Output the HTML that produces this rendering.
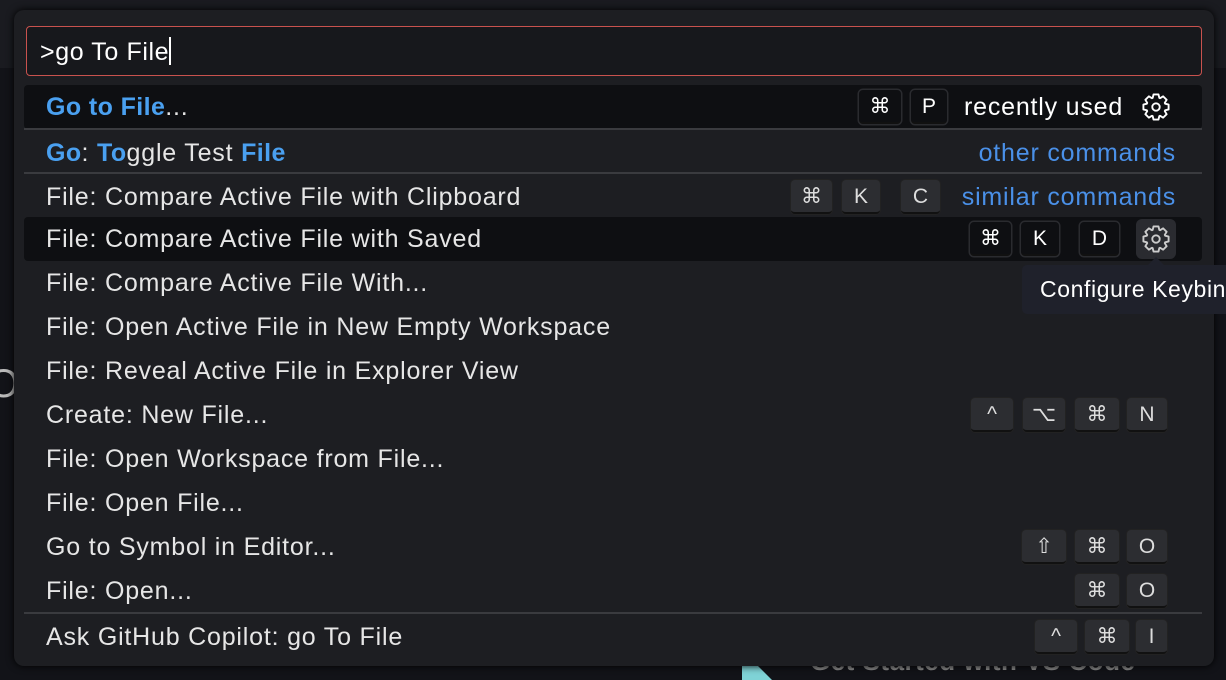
<!DOCTYPE html>
<html><head><meta charset="utf-8"><style>
*{margin:0;padding:0;box-sizing:border-box}
html,body{width:1226px;height:680px;overflow:hidden}
body{background:#121318;position:relative;font-family:"Liberation Sans",sans-serif;color:#e6e6e6}
.topband{position:absolute;left:0;top:0;width:1226px;height:68px;background:#1a1b20}
.bgtext{position:absolute;left:810px;top:646px;font-size:26px;color:#8a8a8a;font-weight:bold;letter-spacing:0.5px}
.tri{position:absolute;left:742px;top:650px;width:0;height:0;border-left:30px solid #7fd3d6;border-top:30px solid transparent}
.O{position:absolute;left:-12px;top:362px;font-size:40px;color:#bbb}
.panel{position:absolute;left:14px;top:10px;width:1200px;height:656px;background:#1d1e22;border-radius:10px;box-shadow:0 0 8px #000}
.input{position:absolute;left:26px;top:26px;width:1176px;height:50px;border:1.5px solid #c9524e;border-radius:4px;background:#17181c;font-size:25px;color:#fff;padding:10px 0 0 13px;letter-spacing:0.6px}
.caret{display:inline-block;width:1.5px;height:28px;background:#fff;vertical-align:-5px}
.row{position:absolute;left:24px;width:1178px;height:44px;font-size:25px;letter-spacing:0.8px;line-height:44px;padding-left:22px;white-space:nowrap}
.sel{background:#0e0f12;border-radius:4px}
.b{color:#4aa0f0;font-weight:bold;letter-spacing:0.4px}
.sep{position:absolute;left:24px;width:1178px;height:2px;background:#3a3b3f}
.k{position:absolute;top:5px;height:34px;background:#2c2d31;border-radius:4px;border-bottom:2px solid #111;box-shadow:0 0 0 1px #222;font-size:21px;line-height:33px;text-align:center;color:#ddd;letter-spacing:0}
.sel .k{background:#0e0f12;box-shadow:0 0 0 1.5px #2a2b2f;color:#fff}
.lab{position:absolute;top:0;font-size:25px;letter-spacing:0.8px}
.blue{color:#4a90e8}
.tip{position:absolute;left:1022px;top:265px;width:220px;height:49px;background:#1f212b;border-radius:5px;font-size:23px;line-height:49px;padding-left:18px;color:#fff;white-space:nowrap;overflow:hidden;letter-spacing:0.6px}
.tipa{position:absolute;left:1148px;top:257px;border:8px solid transparent;border-top:0;border-bottom-color:#1f212b}
</style></head><body>
<div class="topband"></div>
<div class="O">O</div>
<div class="tri"></div><div class="bgtext">Get Started with VS Code</div>
<div class="panel"></div>
<div class="input">&gt;go To File<span class="caret"></span></div>

<svg width="0" height="0" style="position:absolute"><defs><g id="gear"><polygon transform="translate(12,12)" fill="none" stroke="currentColor" stroke-width="1.6" stroke-linejoin="round" points="7.8,-2.84 10.8,-2.1 10.8,2.1 7.8,2.84 7.52,3.51 9.12,6.15 6.15,9.12 3.51,7.52 2.84,7.8 2.1,10.8 -2.1,10.8 -2.84,7.8 -3.51,7.52 -6.15,9.12 -9.12,6.15 -7.52,3.51 -7.8,2.84 -10.8,2.1 -10.8,-2.1 -7.8,-2.84 -7.52,-3.51 -9.12,-6.15 -6.15,-9.12 -3.51,-7.52 -2.84,-7.8 -2.1,-10.8 2.1,-10.8 2.84,-7.8 3.51,-7.52 6.15,-9.12 9.12,-6.15 7.52,-3.51"/><circle cx="12" cy="12" r="3.2" fill="none" stroke="currentColor" stroke-width="1.6"/></g></defs></svg>

<div class="row sel" style="top:85px"><span class="b">Go to File</span>...
<div class="k" style="left:835px;width:42px">⌘</div><div class="k" style="left:887px;width:36px">P</div>
<div class="lab" style="left:940px;color:#fff">recently used</div>
<svg style="position:absolute;left:1118px;top:8px;color:#fff" width="28" height="28" viewBox="0 0 24 24"><use href="#gear"/></svg>
</div>
<div class="sep" style="top:128px"></div>
<div class="row" style="top:131px"><span class="b">Go</span>: <span class="b">To</span>ggle Test <span class="b">File</span>
<div class="lab blue" style="right:26px">other commands</div></div>
<div class="sep" style="top:172px"></div>
<div class="row" style="top:175px">File: Compare Active File with Clipboard
<div class="k" style="left:767px;width:41px">⌘</div><div class="k" style="left:818px;width:38px">K</div><div class="k" style="left:877px;width:39px">C</div>
<div class="lab blue" style="right:26px">similar commands</div></div>
<div class="row sel" style="top:217px">File: Compare Active File with Saved
<div class="k" style="left:946px;width:41px">⌘</div><div class="k" style="left:997px;width:38px">K</div><div class="k" style="left:1056px;width:39px">D</div>
<div style="position:absolute;left:1112px;top:2px;width:40px;height:40px;background:#2a2b30;border-radius:6px"></div>
<svg style="position:absolute;left:1118px;top:8px;color:#ccc" width="28" height="28" viewBox="0 0 24 24"><use href="#gear"/></svg>
</div>
<div class="row" style="top:261px">File: Compare Active File With...</div>
<div class="row" style="top:305px">File: Open Active File in New Empty Workspace</div>
<div class="row" style="top:349px">File: Reveal Active File in Explorer View</div>
<div class="row" style="top:393px">Create: New File...
<div class="k" style="left:947px;width:42px">^</div><div class="k" style="left:999px;width:42px">⌥</div><div class="k" style="left:1051px;width:44px">⌘</div><div class="k" style="left:1103px;width:40px">N</div></div>
<div class="row" style="top:437px">File: Open Workspace from File...</div>
<div class="row" style="top:481px">File: Open File...</div>
<div class="row" style="top:525px">Go to Symbol in Editor...
<div class="k" style="left:998px;width:44px">⇧</div><div class="k" style="left:1051px;width:44px">⌘</div><div class="k" style="left:1103px;width:40px">O</div></div>
<div class="row" style="top:569px">File: Open...
<div class="k" style="left:1051px;width:44px">⌘</div><div class="k" style="left:1103px;width:40px">O</div></div>
<div class="sep" style="top:612px"></div>
<div class="row" style="top:615px">Ask GitHub Copilot: go To File
<div class="k" style="left:1011px;width:42px">^</div><div class="k" style="left:1061px;width:44px">⌘</div><div class="k" style="left:1112px;width:31px">I</div></div>
<div class="tipa"></div>
<div class="tip">Configure Keybinding</div>
</body></html>
